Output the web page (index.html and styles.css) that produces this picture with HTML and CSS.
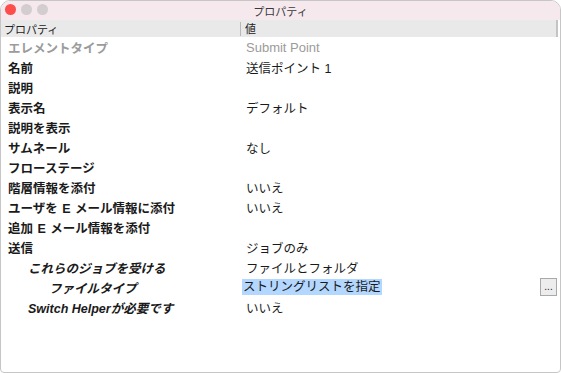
FILE: index.html
```html
<!DOCTYPE html>
<html>
<head>
  <meta charset="UTF-8">
  <title>プロパティ</title>
  <link rel="stylesheet" href="styles.css">
</head>
<body>

<div class="window">
  <div class="titlebar">
    <div class="lights">
      <span class="light red"></span>
      <span class="light"></span>
      <span class="light"></span>
    </div>
    <div class="title">プロパティ</div>
  </div>

  <div class="header">
    <div class="hcell">プロパティ</div>
    <div class="hcell hvalue">値</div>
  </div>

  <div class="props">
    <div class="label dim">エレメントタイプ</div>
    <div class="value dim latin">Submit Point</div>

    <div class="label">名前</div>
    <div class="value">送信ポイント 1</div>

    <div class="label">説明</div>
    <div class="value"></div>

    <div class="label">表示名</div>
    <div class="value">デフォルト</div>

    <div class="label">説明を表示</div>
    <div class="value"></div>

    <div class="label">サムネール</div>
    <div class="value">なし</div>

    <div class="label">フローステージ</div>
    <div class="value"></div>

    <div class="label">階層情報を添付</div>
    <div class="value">いいえ</div>

    <div class="label spaced">ユーザを E メール情報に添付</div>
    <div class="value">いいえ</div>

    <div class="label spaced">追加 E メール情報を添付</div>
    <div class="value"></div>

    <div class="label">送信</div>
    <div class="value">ジョブのみ</div>

    <div class="label sub">これらのジョブを受ける</div>
    <div class="value">ファイルとフォルダ</div>

    <div class="label sub2">ファイルタイプ</div>
    <div class="value editing">
      <span class="selected">ストリングリストを指定</span>
      <button class="more">...</button>
    </div>

    <div class="label sub">Switch Helperが必要です</div>
    <div class="value">いいえ</div>
  </div>
</div>

</body>
</html>
```

FILE: styles.css
```css
body {
  margin: 0;
  padding: 0;
  background: #ffffff;
  font-family: "Liberation Sans", "Noto Sans CJK JP", sans-serif;
  font-size: 12px;
  color: #1a1a1a;
}

.window {
  width: 559px;
  height: 371px;
  border: 1px solid #c6c6c6;
  border-radius: 10px 10px 4px 4px;
  overflow: hidden;
  background: #fff;
}

.titlebar {
  height: 19px;
  background: #f5e9ed;
  position: relative;
  display: flex;
  align-items: center;
  justify-content: center;
}

.lights {
  position: absolute;
  left: 4px;
  top: 3px;
  display: flex;
  gap: 5px;
}

.light {
  width: 11px;
  height: 11px;
  border-radius: 50%;
  background: #d3cdd0;
}

.light.red {
  background: #fc4f4c;
}

.title {
  font-size: 11px;
  color: #3a3a3a;
}

.header {
  height: 17px;
  background: #e9e9e9;
  display: grid;
  grid-template-columns: 239px 1fr;
  align-items: center;
  border-right: 2px solid #c4c4c4;
  margin-right: 2px;
}

.hcell {
  font-size: 11px;
  padding-left: 3px;
  color: #222;
}

.hvalue {
  border-left: 1px solid #b8b8b8;
  padding-left: 4px;
  line-height: 14px;
}

.props {
  display: grid;
  grid-template-columns: 240px 1fr;
  grid-auto-rows: 20px;
}

.label, .value {
  display: flex;
  align-items: center;
  white-space: nowrap;
}

.label {
  padding-left: 7px;
  font-weight: bold;
  font-size: 12.5px;
}

.value {
  padding-left: 5px;
  font-size: 12.5px;
}

.latin {
  font-size: 13px;
}

.spaced {
  word-spacing: 1px;
}

.dim {
  color: #9b9b9b;
}

.label.dim {
  font-weight: bold;
}

.sub {
  padding-left: 27px;
  font-style: italic;
}

.sub2 {
  padding-left: 48px;
  font-style: italic;
}

.editing {
  padding-left: 1px;
  justify-content: space-between;
  padding-right: 3px;
}

.selected {
  background: #b3d7ff;
  line-height: 16px;
  padding: 0 1px;
}

.more {
  width: 17px;
  height: 18px;
  padding: 0;
  margin: 0;
  border: 1px solid #a9a9a9;
  background: #ededed;
  font-family: "Liberation Sans", sans-serif;
  font-size: 10px;
  color: #222;
  line-height: 12px;
}
```
